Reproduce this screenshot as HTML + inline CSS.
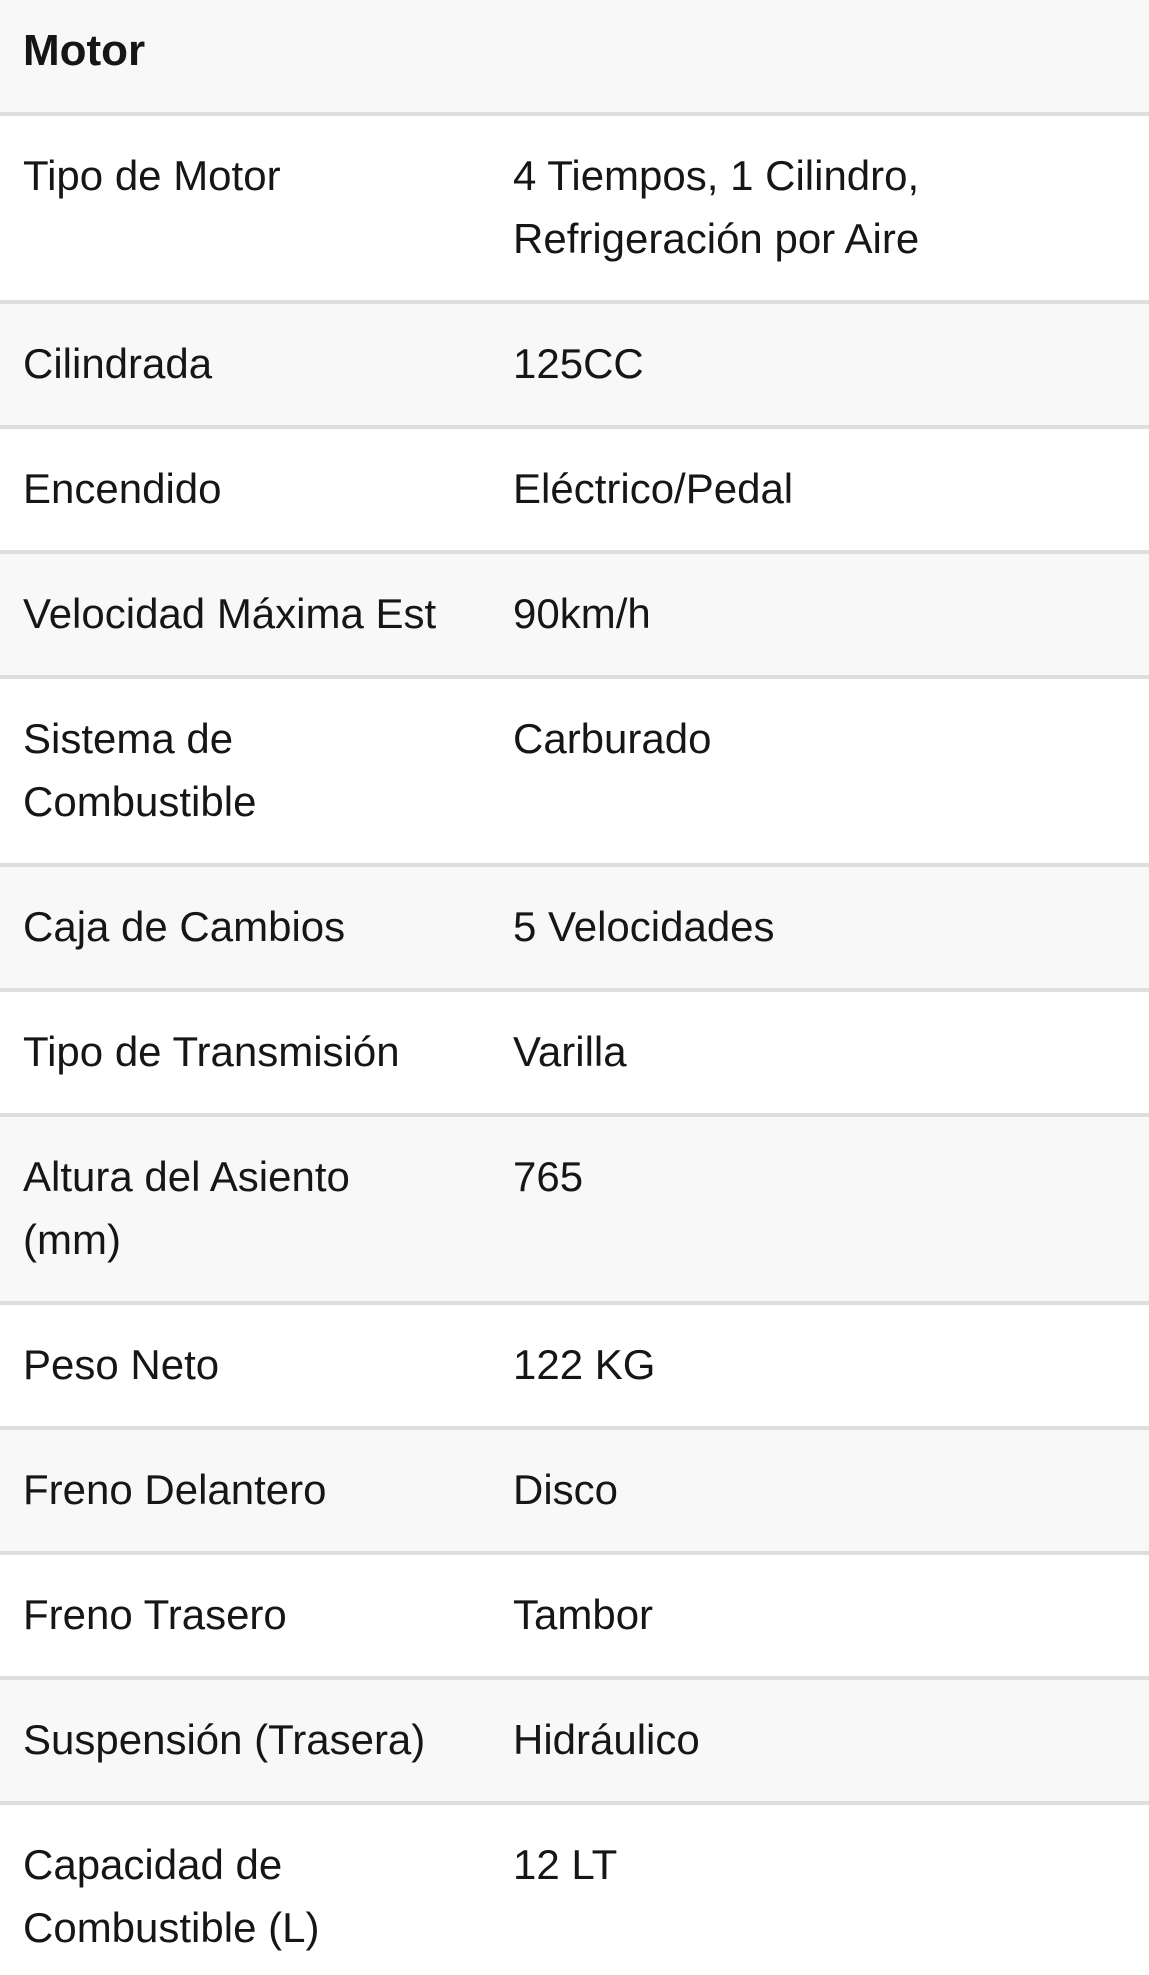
<!DOCTYPE html>
<html><head><meta charset="utf-8"><style>
html,body{margin:0;padding:0;width:1149px;height:1975px;overflow:hidden;background:#fff;}
body{font-family:"Liberation Sans",Arial,sans-serif;color:#161616;font-size:42px;line-height:63px;letter-spacing:0;}
.r{display:flex;box-sizing:border-box;border-bottom:4px solid #dedede;height:125px;padding-top:28px;}
.d{height:188px;}
.g{background:#f8f8f8;}
.h{height:116px;background:#f8f8f8;font-weight:bold;padding-top:19px;font-size:44px;}
.a{width:490px;padding-left:23px;flex:none;}
.b{flex:1;padding-right:20px;}
</style></head><body>
<div class="r h"><div class="a">Motor</div></div>
<div class="r d"><div class="a">Tipo de Motor</div><div class="b">4 Tiempos, 1 Cilindro,<br>Refrigeración por Aire</div></div>
<div class="r g"><div class="a">Cilindrada</div><div class="b">125CC</div></div>
<div class="r"><div class="a">Encendido</div><div class="b">Eléctrico/Pedal</div></div>
<div class="r g"><div class="a">Velocidad Máxima Est</div><div class="b">90km/h</div></div>
<div class="r d"><div class="a">Sistema de<br>Combustible</div><div class="b">Carburado</div></div>
<div class="r g"><div class="a">Caja de Cambios</div><div class="b">5 Velocidades</div></div>
<div class="r"><div class="a">Tipo de Transmisión</div><div class="b">Varilla</div></div>
<div class="r d g"><div class="a">Altura del Asiento<br>(mm)</div><div class="b">765</div></div>
<div class="r"><div class="a">Peso Neto</div><div class="b">122 KG</div></div>
<div class="r g"><div class="a">Freno Delantero</div><div class="b">Disco</div></div>
<div class="r"><div class="a">Freno Trasero</div><div class="b">Tambor</div></div>
<div class="r g"><div class="a">Suspensión (Trasera)</div><div class="b">Hidráulico</div></div>
<div class="r d"><div class="a">Capacidad de<br>Combustible (L)</div><div class="b">12 LT</div></div>
</body></html>
